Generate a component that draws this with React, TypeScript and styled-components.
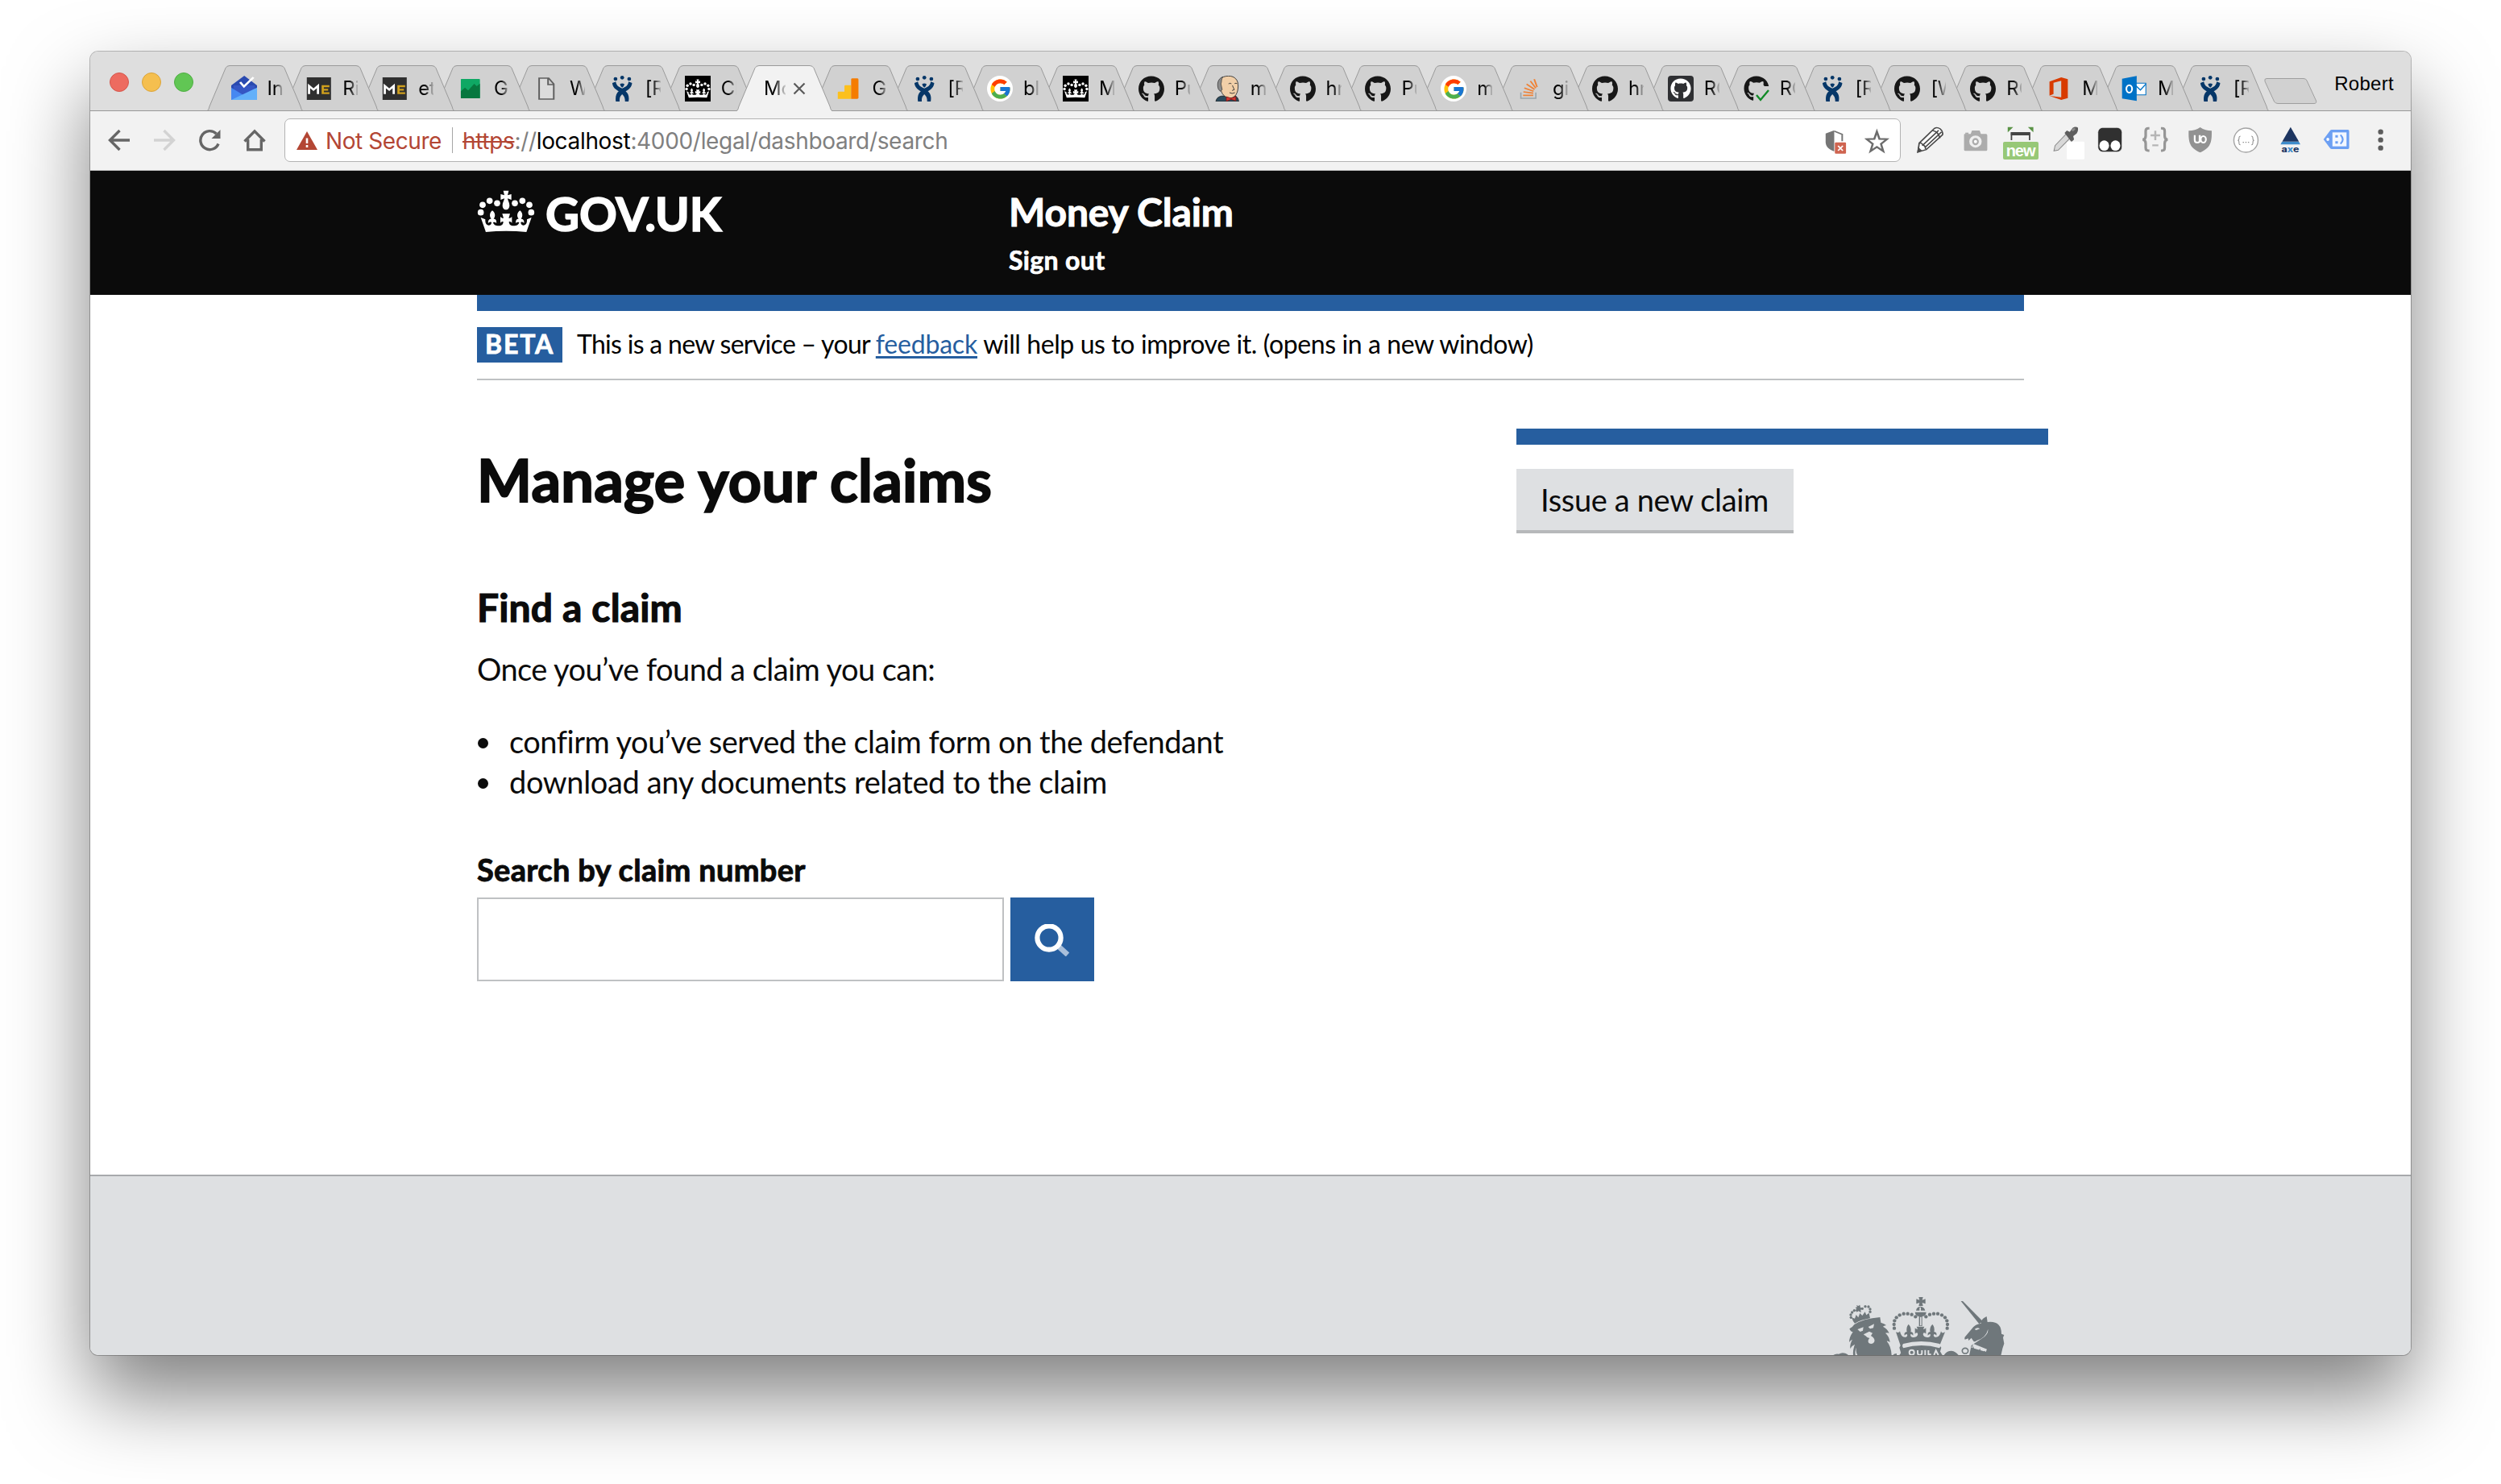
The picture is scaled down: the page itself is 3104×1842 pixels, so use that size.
import React from 'react';
import styled, { createGlobalStyle, css } from 'styled-components';
import { FaGithub } from 'react-icons/fa';
import { FcGoogle } from 'react-icons/fc';

const blue = '#265e9f';
const ink = '#0b0b0b';
const pageFont = `Lato, 'Open Sans', sans-serif`;
const chromeFont = `Inter, Roboto, sans-serif`;

const GlobalStyle = createGlobalStyle`
  body { margin: 0; background: #fff; }
  *, *::before, *::after { box-sizing: border-box; }
`;

const Desktop = styled.div`
  width: 3104px;
  height: 1842px;
  padding: 64px 112px;
  overflow: hidden;
`;

const BrowserWindow = styled.div`
  display: flex;
  flex-direction: column;
  width: 2880px;
  height: 1618px;
  overflow: hidden;
  border-radius: 10px;
  background: #fff;
  box-shadow: 0 0 0 1px rgba(0, 0, 0, 0.26), 0 50px 100px rgba(0, 0, 0, 0.5);
`;

/* ---------- tab strip ---------- */

const TabStrip = styled.div`
  display: flex;
  flex: none;
  height: 74px;
  background: linear-gradient(#989898, #989898) bottom / 100% 1px no-repeat, #dedede;
`;

const TrafficLights = styled.div`
  display: flex;
  gap: 16px;
  width: 145px;
  padding: 26px 0 0 24px;
`;

const Light = styled.span<{ $fill: string; $edge: string }>`
  width: 24px;
  height: 24px;
  border-radius: 50%;
  background: ${p => p.$fill};
  border: 1px solid ${p => p.$edge};
`;

const TabList = styled.div`
  display: flex;
  padding-top: 17px;
`;

const Tab = styled.div<{ $layer: number; $active?: boolean }>`
  display: grid;
  grid-template-columns: 119px;
  grid-template-rows: 57px;
  flex: none;
  width: 119px;
  margin-right: -25.15px;
  z-index: ${p => p.$layer};
  --fill: ${p => (p.$active ? '#f2f2f2' : '#d1d1d1')};
`;

const TabShape = styled.svg`
  grid-area: 1 / 1;
  width: 119px;
  height: 57px;
  overflow: visible;
`;

const TabContent = styled.div<{ $active?: boolean }>`
  grid-area: 1 / 1;
  z-index: 1;
  display: flex;
  align-items: center;
  height: 58px;
  padding-left: ${p => (p.$active ? 34 : 29.5)}px;
`;

const Favicon = styled.span`
  display: flex;
  align-items: center;
  justify-content: center;
  width: 32px;
  height: 32px;
  margin-right: 13px;
  color: #171717;
  svg { display: block; }
`;

const GoogleDisc = styled.span`
  display: flex;
  align-items: center;
  justify-content: center;
  width: 32px;
  height: 32px;
  border-radius: 50%;
  background: #fff;
`;

const CatTile = styled(GoogleDisc)`
  border-radius: 4px;
  background: #2f3033;
  color: #fff;
`;

const CheckedCat = styled.span`
  position: relative;
  width: 32px;
  height: 32px;
  > svg:last-child { position: absolute; right: 0; bottom: 0; }
`;

const TabTitle = styled.span<{ $width: number }>`
  width: ${p => p.$width}px;
  overflow: hidden;
  white-space: nowrap;
  font: 400 24px/32px ${chromeFont};
  letter-spacing: -0.3px;
  color: #000;
  mask-image: linear-gradient(to right, #000 45%, transparent 108%);
`;

const CloseIcon = styled.svg`
  width: 16px;
  height: 16px;
  margin-left: 9px;
`;

const NewTab = styled.svg`
  width: 66px;
  height: 32px;
  margin: 33px 0 0 19px;
`;

const ProfileName = styled.span`
  margin: 21px 21px 0 auto;
  font: 400 24px/38px 'Liberation Sans', Arial, sans-serif;
  letter-spacing: 0.3px;
  color: #000;
`;

/* ---------- toolbar ---------- */

const Toolbar = styled.div`
  display: flex;
  flex: none;
  align-items: flex-start;
  height: 74px;
  padding-top: 9px;
  background: #f2f2f2;
  border-bottom: 1px solid #bdbdbd;
`;

const NavButtons = styled.div`
  display: flex;
  gap: 28px;
  align-items: center;
  width: 241px;
  height: 54px;
  padding-left: 22px;
`;

const NavIcon = styled.svg<{ $dim?: boolean }>`
  width: 28px;
  height: 28px;
  fill: none;
  stroke: ${p => (p.$dim ? '#d3d3d3' : '#666')};
  stroke-width: 3.4;
`;

const Omnibox = styled.div`
  display: flex;
  align-items: center;
  width: 2006px;
  height: 54px;
  padding: 0 13px 0 14px;
  background: #fff;
  border: 1px solid #b3b3b3;
  border-radius: 7px;
  font: 400 28px/52px ${chromeFont};
`;

const Warning = styled.svg`
  width: 26px;
  height: 23px;
  margin-right: 10px;
`;

const NotSecure = styled.span`
  padding-top: 2px;
  color: #b34634;
  letter-spacing: -0.42px;
`;

const Divider = styled.span`
  width: 1px;
  height: 32px;
  margin: 0 12px 0 13px;
  background: #a6a6a6;
`;

const Url = styled.span`
  padding-top: 2px;
  letter-spacing: -0.33px;
  color: #808080;
  s { color: #b34634; text-decoration-thickness: 2px; }
  b { color: #000; font-weight: 400; }
`;

const OmniboxActions = styled.div`
  display: flex;
  gap: 22px;
  height: 41px;
  margin: 9px 0 0 auto;
`;

const Extensions = styled.div`
  display: flex;
  padding-top: 10px;
`;

const ToolIcon = styled.svg<{ $w: number; $gap?: number }>`
  flex: none;
  display: block;
  width: ${p => p.$w}px;
  height: 41px;
  margin-left: ${p => p.$gap ?? 0}px;
`;

const Badged = styled.span`
  position: relative;
  margin-left: 17px;
`;

const NewBadge = styled.span`
  position: absolute;
  left: 1px;
  bottom: 0;
  width: 44px;
  height: 22px;
  border-radius: 2px;
  background: #97c877;
  color: #fff;
  font: 700 20px/22px 'Liberation Sans', Arial, sans-serif;
  letter-spacing: -1px;
  text-align: center;
`;

/* ---------- page ---------- */

const column = css`
  width: 1920px;
  margin-left: 480px;
`;

const PageHeader = styled.header`
  flex: none;
  height: 154px;
  background: ${ink};
  color: #fff;
  font-family: ${pageFont};
`;

const HeaderColumn = styled.div`
  ${column}
  display: grid;
  grid-template-columns: 660px 1fr;
`;

const GovLogo = styled.a`
  display: flex;
  gap: 13px;
  padding-top: 22px;
  font-size: 58px;
  line-height: 61px;
  font-weight: 700;
  letter-spacing: -0.2px;
  -webkit-text-stroke: 1.6px #fff;
`;

const HeaderCrown = styled.svg`
  width: 72px;
  height: 52px;
  margin-top: 2px;
`;

const HeaderProposition = styled.div`
  display: flex;
  flex-direction: column;
  gap: 10px;
  padding-top: 20px;
  font-weight: 700;
`;

const ServiceName = styled.span`
  font-size: 48px;
  line-height: 61px;
  letter-spacing: -0.15px;
  -webkit-text-stroke: 1px #fff;
`;

const SignOut = styled.a`
  font-size: 32px;
  line-height: 40px;
  letter-spacing: 0.35px;
  -webkit-text-stroke: 0.7px #fff;
`;

const Main = styled.main`
  ${column}
  flex: 1;
  color: ${ink};
  font-family: ${pageFont};
`;

const PhaseBanner = styled.div`
  display: flex;
  gap: 18px;
  padding: 20px 0;
  border-top: 20px solid ${blue};
  border-bottom: 2px solid #bfc1c3;
  font-size: 32px;
  line-height: 42px;
  color: #000;
`;

const PhaseTag = styled.strong`
  width: 106px;
  height: 44px;
  padding-left: 10px;
  background: ${blue};
  color: #fff;
  letter-spacing: 1.9px;
  -webkit-text-stroke: 0.8px #fff;
`;

const PhaseText = styled.span`
  letter-spacing: -0.4px;
  white-space: nowrap;
  a {
    color: ${blue};
    letter-spacing: -0.2px;
    text-decoration: underline;
    text-decoration-thickness: 3px;
    text-underline-offset: 3px;
    text-decoration-skip-ink: none;
  }
`;

const PhaseIntro = styled.span`
  letter-spacing: -0.7px;
`;

const Columns = styled.div`
  display: grid;
  grid-template-columns: 1290px 660px;
  align-items: start;
`;

const Claims = styled.section`
  padding-top: 83px;
  font-size: 38px;
  line-height: 50px;
`;

const Title = styled.h1`
  margin: 0 0 89px;
  font-size: 72px;
  line-height: 80px;
  letter-spacing: 0.33px;
  -webkit-text-stroke: 2px ${ink};
`;

const Subtitle = styled.h2`
  margin: 0 0 21px;
  font-size: 48px;
  line-height: 60px;
  letter-spacing: 0.15px;
  -webkit-text-stroke: 1.2px ${ink};
`;

const Lead = styled.p`
  margin: 0 0 40px;
  letter-spacing: -0.56px;
`;

const BulletList = styled.ul`
  margin: 0 0 59px;
  padding: 0;
  list-style: none;
`;

const Bullet = styled.li<{ $tracking: number }>`
  display: flex;
  align-items: center;
  gap: 26px;
  letter-spacing: ${p => p.$tracking}px;
  &::before {
    content: '';
    width: 13px;
    height: 13px;
    margin: 4px 0 0 1px;
    border-radius: 50%;
    background: ${ink};
  }
`;

const FieldLabel = styled.label`
  display: block;
  margin-bottom: 10px;
  font-weight: 700;
  letter-spacing: 0.32px;
  -webkit-text-stroke: 0.9px ${ink};
`;

const SearchRow = styled.div`
  display: flex;
  gap: 8px;
`;

const SearchInput = styled.input`
  width: 654px;
  height: 104px;
  border: 2px solid #bfc1c3;
  border-radius: 0;
  background: #fff;
  outline: none;
`;

const SearchButton = styled.button`
  display: flex;
  width: 104px;
  height: 104px;
  padding: 33px 0 0 30px;
  border: 0;
  background: ${blue};
`;

const Sidebar = styled.aside`
  margin-top: 60px;
  padding-top: 30px;
  border-top: 20px solid ${blue};
`;

const SecondaryButton = styled.a`
  display: block;
  width: 344px;
  height: 80px;
  padding: 13px 0 0 30px;
  background: #dee0e2;
  border-bottom: 4px solid #b7b9bb;
  font-size: 38px;
  line-height: 50px;
  letter-spacing: -0.35px;
  white-space: nowrap;
`;

const Footer = styled.footer`
  display: flex;
  flex: none;
  justify-content: flex-end;
  align-items: flex-end;
  height: 224px;
  padding-right: 492px;
  background: #dee0e2;
  border-top: 2px solid #a7a9ac;
`;

const Arms = styled.svg`
  display: block;
  width: 230px;
  height: 74px;
  fill: #6f777b;
`;

/* ---------- drawings ---------- */

const CrownShape = () => (
  <g fill="#fff">
    {[[57, 103], [83, 88], [111, 97], [177, 97], [205, 88], [231, 103], [50, 131], [238, 131]].map(([x, y]) => (
      <circle key={`${x}-${y}`} cx={x} cy={y} r={11.5} />
    ))}
    <path d="M134 50h20l-4 17 14-4v21l-14-5c0 7 7 14 7 26 0 9-5 16-13 16s-13-7-13-16c0-12 7-19 7-26l-14 5V63l14 4z" />
    <path d="M69 204l-19-54 17 7c-1 15 5 23 14 22 6-1 9-5 9-11-4-3-10 0-12 3-2-10 3-16 11-16-8-10-6-23 4-31 11 8 13 21 5 31 8 0 12 6 10 16-3-4-8-5-12-3 1 8 9 13 21 13 11 0 17-6 17-15-4-2-8 0-11 5V147c4 5 8 6 12 5l-5-16h29l-5 16c4 1 8 0 12-5v24c-3-5-7-7-11-5 0 9 6 15 17 15 12 0 20-5 21-13-4-2-9-1-12 3-2-10 2-16 10-16-8-10-6-23 5-31 10 8 12 21 4 31 8 0 13 6 11 16-2-3-8-6-12-3 0 6 3 10 9 11 9 1 15-7 14-22l17-7-19 54q-75-7-152 0z" />
  </g>
);

const Inbox = () => (
  <svg width="32" height="32" viewBox="475 132 81 96" preserveAspectRatio="none">
    <path d="M475 168l41-36 40 36v52h-81z" fill="#2a4ab0" />
    <path d="M482 168h67v24l-33 22-34-22z" fill="#3556c4" />
    <path d="M475 176l41 30-36 16h-5z" fill="#4688f1" />
    <path d="M556 176v46h-81z" fill="#63b0fa" />
    <path d="M503 156l12 16 30-34" stroke="#fff" strokeWidth="7" fill="none" />
  </svg>
);

const Me = () => (
  <svg width="32" height="32" viewBox="706 132 81 96" preserveAspectRatio="none">
    <rect x="708" y="138" width="76" height="84" fill="#2f2f2f" />
    <path d="M715 200v-30l14 14 14-14v30" stroke="#fff" strokeWidth="7" fill="none" />
    <path d="M779 171h-21v26h21M758 184h17" stroke="#cf9f1c" strokeWidth="7" fill="none" />
  </svg>
);

const GreenChart = () => (
  <svg width="32" height="32" viewBox="1184 132 81 96" preserveAspectRatio="none">
    <rect x="1194" y="144" width="60" height="72" rx="2" fill="#0fa864" />
    <path d="M1194 190l13-14 10 11 19-25 8 9 10-10v55h-60z" fill="#07773f" />
  </svg>
);

const PageFile = () => (
  <svg width="32" height="32" viewBox="1421 132 81 96" preserveAspectRatio="none">
    <path d="M1439 141h30l16 22v56h-46zM1467 141v24h18" fill="#dcdcdc" stroke="#5f5f5f" strokeWidth="5" />
  </svg>
);

const Jira = () => (
  <svg width="32" height="32" viewBox="141 132 81 96" preserveAspectRatio="none" fill="#063768">
    <ellipse cx="161" cy="144" rx="6" ry="7" />
    <ellipse cx="182" cy="139" rx="6" ry="7" />
    <ellipse cx="204" cy="144" rx="6" ry="7" />
    <path d="M175 163q7-5 14 0-1 9-7 13-6-4-7-13z" />
    <path d="M151 159l11-5c1 14 9 21 20 25 11-4 19-11 20-25l11 5c-1 16-10 24-20 31 8 8 12 20 9 38h-11c0-13-3-21-9-27-6 6-9 14-8 27h-12c-2-18 1-30 9-38-10-7-19-15-20-31z" />
  </svg>
);

const CrownTile = () => (
  <svg width="32" height="32" viewBox="36 20 216 216">
    <rect x="36" y="20" width="216" height="216" />
    <CrownShape />
  </svg>
);

const Analytics = () => (
  <svg width="32" height="32" viewBox="856 132 81 96" preserveAspectRatio="none">
    <path d="M863 218v-24q0-3 3-3h18v-21q0-3 3-3h18v51z" fill="#fcc01c" />
    <path d="M905 218v-72q0-4 4-4h15q4 0 4 4v68q0 4-4 4z" fill="#f57c00" />
  </svg>
);

const Jenkins = () => (
  <svg width="32" height="32" viewBox="520 132 81 96" preserveAspectRatio="none">
    <path d="M525 228q2-16 16-20l40-4q15 6 16 24z" fill="#2c4a5c" stroke="#1b1b1b" strokeWidth="2" />
    <path d="M534 178c-6-28 8-45 31-45 20 0 31 16 30 38 0 26-10 44-24 44-14 0-25-10-29-26z" fill="#f1cfa8" stroke="#333" strokeWidth="2.5" />
    <path d="M533 182c-6-22 0-40 14-46-6 10-3 18-6 26l4 22-6 6z" fill="#8b8b8b" stroke="#333" strokeWidth="2" />
    <path d="M565 162q5-4 9 0M584 161q5-3 8 1M577 168l6 16-7 3M568 195q8 6 17 0" fill="none" stroke="#333" strokeWidth="2.5" />
    <path d="M558 210l15 6 15-7v17l-15-6-15 7z" fill="#d33833" stroke="#751512" strokeWidth="2" />
  </svg>
);

const Stack = () => (
  <svg width="32" height="32" viewBox="1475 132 81 96" preserveAspectRatio="none" fill="none" strokeWidth="5">
    <path d="M1489 194v22h47v-22" stroke="#9aa5ab" strokeWidth="4" />
    <path d="M1496 205h32M1497 192l31 5M1500 178l29 12M1507 163l25 20M1519 152l17 26M1531 145l9 29" stroke="#ef8236" />
  </svg>
);

const Office = () => (
  <svg width="32" height="32" viewBox="161 132 90 96" preserveAspectRatio="none" fill="#d83b01">
    <path d="M174 154l41-16 23 7v70l-23 7-41-15 41 5v-61l-27 7v42l-14 6z" />
  </svg>
);

const Outlook = () => (
  <svg width="32" height="32" viewBox="426 132 90 96" preserveAspectRatio="none">
    <path d="M470 160h41v43h-41z" fill="#fff" stroke="#0072c6" strokeWidth="3" />
    <path d="M472 165l20 20 19-22" fill="none" stroke="#0072c6" strokeWidth="4" />
    <path d="M428 143l51-10v93l-51-9z" fill="#0072c6" />
    <ellipse cx="453" cy="181" rx="10" ry="14" fill="none" stroke="#fff" strokeWidth="6" />
  </svg>
);

const Cat = () => <FaGithub size={33} />;
const Google = () => <GoogleDisc><FcGoogle size={29} /></GoogleDisc>;
const DarkCat = () => <CatTile><FaGithub size={26} /></CatTile>;
const CatChecked = () => (
  <CheckedCat>
    <FaGithub size={32} />
    <svg width="19" height="19" viewBox="0 0 19 19">
      <path d="M0 9L12 0h7v19H0z" fill="#d1d1d1" />
      <path d="M3 11l5 6L18 5" fill="none" stroke="#118a27" strokeWidth="2.4" />
    </svg>
  </CheckedCat>
);

const tabs: { title: string; icon?: React.ComponentType; active?: boolean }[] = [
  { title: 'In', icon: Inbox },
  { title: 'Ri', icon: Me },
  { title: 'et', icon: Me },
  { title: 'Go', icon: GreenChart },
  { title: 'W', icon: PageFile },
  { title: '[R', icon: Jira },
  { title: 'Cl', icon: CrownTile },
  { title: 'Mo', active: true },
  { title: 'G', icon: Analytics },
  { title: '[R', icon: Jira },
  { title: 'bl', icon: Google },
  { title: 'M', icon: CrownTile },
  { title: 'Pu', icon: Cat },
  { title: 'm', icon: Jenkins },
  { title: 'hm', icon: Cat },
  { title: 'Pu', icon: Cat },
  { title: 'm', icon: Google },
  { title: 'gi', icon: Stack },
  { title: 'hm', icon: Cat },
  { title: 'RO', icon: DarkCat },
  { title: 'RO', icon: CatChecked },
  { title: '[R', icon: Jira },
  { title: '[W', icon: Cat },
  { title: 'RO', icon: Cat },
  { title: 'M', icon: Office },
  { title: 'M', icon: Outlook },
  { title: '[R', icon: Jira },
];

const lights = [
  ['#ed6b60', '#d5564c'],
  ['#f5bf4f', '#dba43a'],
  ['#61c654', '#4fae43'],
];

function BrowserTabs() {
  return (
    <TabStrip>
      <TrafficLights>
        {lights.map(([fill, edge]) => <Light key={fill} $fill={fill} $edge={edge} />)}
      </TrafficLights>
      <TabList>
        {tabs.map(({ title, icon: Icon, active }, i) => (
          <Tab key={i} $active={active} $layer={active ? 50 : 40 - i}>
            <TabShape viewBox="0 0 119 57">
              <path d="M0 57C2 56 2 54 3 51L23 3.5Q24.500 .5 28 .5H91Q94.500 .5 96 3.500L116 51C117 54 117 56 119 57z" fill="var(--fill)" />
              <path d="M0 56.500C2 56 2 54 3 51L23 3.500Q24.500 .5 28 .5H91Q94.500 .5 96 3.500L116 51C117 54 117 56 119 56.500" fill="none" stroke="#9a9a9a" />
              {!active && <path d="M0 56.500H119" stroke="#989898" />}
            </TabShape>
            <TabContent $active={active}>
              {Icon && <Favicon><Icon /></Favicon>}
              <TabTitle $width={active ? 27 : 19}>{title}</TabTitle>
              {active && (
                <CloseIcon viewBox="0 0 16 16">
                  <path d="M1.500 1.500l13 13M14.500 1.500l-13 13" stroke="#5a5a5a" strokeWidth="2.2" />
                </CloseIcon>
              )}
            </TabContent>
          </Tab>
        ))}
      </TabList>
      <NewTab viewBox="0 0 66 32">
        <path d="M3 .5H49Q52 .5 53 3L64.500 28Q65.500 31.500 62 31.500H17Q14 31.500 12.500 29L1 4Q0 .5 3 .5z" fill="#d1d1d1" stroke="#9f9f9f" />
      </NewTab>
      <ProfileName>Robert</ProfileName>
    </TabStrip>
  );
}

function BrowserToolbar() {
  return (
    <Toolbar>
      <NavButtons>
        <NavIcon viewBox="0 0 28 28"><path d="M27 14H3M14.500 2L2.500 14l12 12" /></NavIcon>
        <NavIcon viewBox="0 0 28 28" $dim><path d="M1 14h24M13.500 2l12 12-12 12" /></NavIcon>
        <NavIcon viewBox="0 0 28 28">
          <path d="M25 18.500A11.500 11.500 0 1 1 22.500 6" />
          <path d="M27.500 1v11H16.500z" fill="#666" stroke="none" />
        </NavIcon>
        <NavIcon viewBox="0 0 28 28"><path d="M1.500 15.500L14 2.800l12.500 12.700M5.700 13v12.800h16.600V13" /></NavIcon>
      </NavButtons>
      <Omnibox>
        <Warning viewBox="0 0 26 23">
          <path d="M13 0l13 23H0z" fill="#b34634" />
          <path d="M13 8.500v6.500M13 17v3" stroke="#fff" strokeWidth="2.600" />
        </Warning>
        <NotSecure>Not Secure</NotSecure>
        <Divider />
        <Url><s>https</s>://<b>localhost</b>:4000/legal/dashboard/search</Url>
        <OmniboxActions>
          <ToolIcon $w={26.9} viewBox="925 322 68 123" preserveAspectRatio="none">
            <path d="M930 348l24-12 26 12v32c-1 15-12 26-26 29-14-4-24-15-24-29z" fill="#fff" />
            <path d="M954 333v79c-16-6-27-18-27-35v-32z" fill="#757575" />
            <path d="M954 336l25 12v26" fill="none" stroke="#757575" strokeWidth="5" />
            <rect x="956" y="378" width="35" height="42" rx="3" fill="#cf6450" />
            <path d="M966 391l15 18M981 391l-15 18" stroke="#fff" strokeWidth="4.500" />
          </ToolIcon>
          <ToolIcon $w={30.8} viewBox="1048 322 78 123" preserveAspectRatio="none">
            <path d="M1087 338l8 27 24 1-19 18 7 27-20-16-20 16 7-27-19-18 24-1z" fill="none" stroke="#6c6c6c" strokeWidth="6.500" />
          </ToolIcon>
        </OmniboxActions>
      </Omnibox>
      <Extensions>
        <ToolIcon $gap={19.3} $w={34.8} viewBox="1210 322 88 123" preserveAspectRatio="none" fill="none" stroke="#4a4a4a" strokeWidth="4.500">
          <path d="M1216 417l4-33 48-55q8-6 18 2 10 10 7 22l-51 55z" fill="#fff" />
          <path d="M1220 384q10-2 11 8 8 0 9 14M1231 392l50-56M1238 400l52-58M1261 337q18 2 24 28" />
          <path d="M1216 417l2-14 8 9z" fill="#4a4a4a" />
        </ToolIcon>
        <ToolIcon $gap={22.9} $w={31.6} viewBox="1356 322 80 123" preserveAspectRatio="none">
          <path d="M1361 350h20l4-13h24l4 13h16q4 0 4 5v53q0 5-4 5h-65q-4 0-4-5v-53q0-5 1-5z" fill="#acacac" />
          <rect x="1364" y="345" width="10" height="6" fill="#acacac" />
          <ellipse cx="1396" cy="378" rx="15" ry="18" fill="#acacac" stroke="#efefef" strokeWidth="9" />
          <ellipse cx="1396" cy="378" rx="5" ry="6" fill="#fff" />
        </ToolIcon>
        <Badged>
          <ToolIcon $w={45.4} viewBox="15 322 127 123" preserveAspectRatio="none">
            <path d="M34 324h19l-19 20zM123 324v20l-19-20z" fill="#5a9346" />
            <path d="M47 373v-27h63v27" fill="none" stroke="#454545" strokeWidth="5" />
            <path d="M45 349h66" stroke="#454545" strokeWidth="12" />
          </ToolIcon>
          <NewBadge>new</NewBadge>
        </Badged>
        <ToolIcon $gap={17.1} $w={41.4} viewBox="190 322 116 123" preserveAspectRatio="none">
          <path d="M196 413l4-20 42-47 15 14-46 50z" fill="#d8d8d8" stroke="#8d8d8d" strokeWidth="3" />
          <path d="M233 346l8-9 10 5 10-15q10-7 18-1 3 12-4 22l-12 10 3 12-9 10z" fill="#5d5d5d" />
          <path d="M256 333l10-6 6 4-10 10z" fill="#8b8b8b" />
          <rect x="241" y="378" width="61" height="66" rx="3" fill="#fff" />
        </ToolIcon>
        <ToolIcon $gap={15} $w={31.4} viewBox="348 322 88 123" preserveAspectRatio="none">
          <rect x="350" y="326" width="84" height="91" rx="17" ry="18" fill="#303030" stroke="#fff" strokeWidth="2" />
          <ellipse cx="372" cy="393" rx="17" ry="19" fill="#fff" />
          <ellipse cx="411" cy="393" rx="17" ry="19" fill="#fff" />
        </ToolIcon>
        <ToolIcon $gap={23.6} $w={33.6} viewBox="502 322 94 123" preserveAspectRatio="none" fill="none" stroke="#969696" strokeWidth="9">
          <path d="M529 329h-4q-9 0-9 10v18q0 12-10 14 10 2 10 14v16q0 11 9 11h4M569 329h4q9 0 9 10v18q0 12 10 14-10 2-10 14v16q0 11-9 11h-4" />
          <path d="M533 355h33M549.500 338v35M539 392h21" stroke="#b5b5b5" strokeWidth="7" />
        </ToolIcon>
        <ToolIcon $gap={24.2} $w={30} viewBox="664 322 84 123" preserveAspectRatio="none">
          <path d="M705 325c12 9 25 13 40 13 1 42-3 64-40 81-37-17-41-39-40-81 15 0 28-4 40-13z" fill="#929292" />
          <path d="M686 354v18q0 10 9 10t9-10v-18M703 354v27" fill="none" stroke="#fff" strokeWidth="6" />
          <ellipse cx="716" cy="370" rx="9" ry="12" fill="none" stroke="#fff" strokeWidth="6" />
        </ToolIcon>
        <ToolIcon $gap={25} $w={32.9} viewBox="818 322 92 123" preserveAspectRatio="none">
          <ellipse cx="864" cy="373" rx="42" ry="45" fill="#fff" stroke="#a3a3a3" strokeWidth="4" />
          <path d="M845 358q-5 0-5 6v4q0 5-4 6 4 1 4 6v4q0 6 5 6M883 358q5 0 5 6v4q0 5 4 6-4 1-4 6v4q0 6-5 6" fill="none" stroke="#8f8f8f" strokeWidth="3" />
          <path d="M853 381h4M862 381h4M871 381h4" stroke="#8f8f8f" strokeWidth="4" />
        </ToolIcon>
        <ToolIcon $gap={25.7} $w={25.7} viewBox="982 322 72 123" preserveAspectRatio="none">
          <path d="M1018 324l29 54h-58z" fill="#1d3560" />
          <path d="M988 379h59l5 10h-69z" fill="#3f8ccb" />
          <text x="986" y="418" fontFamily="Inter, sans-serif" fontWeight="800" fontSize="30" textLength="62" lengthAdjust="spacingAndGlyphs" fill="#1d3560">
            a<tspan fill="#3f8ccb">x</tspan>e
          </text>
        </ToolIcon>
        <ToolIcon $gap={27.2} $w={33.6} viewBox="1130 322 94 123" preserveAspectRatio="none">
          <path d="M1132 370l23-33q2-3 6-3h56q4 0 4 5v62q0 5-4 5h-56q-4 0-6-3z" fill="#6c9ff3" />
          <ellipse cx="1147" cy="370" rx="5" ry="6" fill="#fff" />
          <rect x="1163" y="344" width="49" height="52" fill="#f3f7ff" />
          <path d="M1173 354h9v9h-9zM1173 377h9v9h-9z" fill="#6c9ff3" />
          <path d="M1191 353q16 17 0 34" fill="none" stroke="#6c9ff3" strokeWidth="6" />
        </ToolIcon>
        <ToolIcon $gap={34.2} $w={9.3} viewBox="1320 322 26 123" preserveAspectRatio="none" fill="#5c5c5c">
          <ellipse cx="1333" cy="342" rx="9" ry="9.500" />
          <ellipse cx="1333" cy="372" rx="9" ry="9.500" />
          <ellipse cx="1333" cy="402" rx="9" ry="9.500" />
        </ToolIcon>
      </Extensions>
    </Toolbar>
  );
}

const armsBeads = [
  [393, 236], [392, 222], [394, 208], [401, 196], [413, 187], [428, 182], [443, 182], [458, 185], [472, 193],
  [590, 236], [591, 222], [589, 208], [582, 196], [570, 187], [555, 182], [540, 182], [525, 185], [511, 193],
];
const lionBeads = [[232, 196], [231, 186], [236, 177], [244, 170], [254, 169], [285, 155], [297, 156], [303, 165], [303, 175], [274, 163]];

function RoyalArms() {
  return (
    <Arms viewBox="150 114 690 222">
      {armsBeads.map(([x, y]) => <circle key={`${x}-${y}`} cx={x} cy={y} r={6.5} />)}
      <path d="M484 120h16l-3 11 12-4v18l-12-4 3 12h-16l3-12-12 4v-18l12 4z" />
      <path d="M474 170q2-13 16-15 15 2 18 15h-16v-12h-5v12zM470 176h42q-1 14-15 16v36h-12v-36q-13-2-15-16z" />
      <path d="M489 194h5v32h-5z" fill="#dee0e2" />
      <path d="M416 300l-17-50q12 5 15-3c3 15 10 24 22 22 6-2 7-7 4-11q-6 0-9 5-3-12 9-14-4-16 6-28 12 12 8 28 12 2 9 14-4-6-9-5c-3 12 10 14 20 10 8-4 8-12 4-15q-5 0-8 4v-22q4 5 10 4l-4-9h29l-4 9q6 1 10-4v22q-3-4-8-4c-4 3-4 11 4 15 10 4 23 2 20-10q-5-1-9 5-3-12 9-14-4-16 8-28 10 12 6 28 12 2 9 14-3-5-9-5c-3 4-2 9 4 11 12 2 19-7 22-22 3 8 8 8 15 3l-20 50 6 8-8 28H420l-8-28z" />
      <path d="M426 294q66-18 136 0 6 8-1 16-66-20-134 0-7-8-1-16z" fill="#dee0e2" />
      <path d="M412 336q14-24 40-29 42-8 84 0 26 6 36 29z" />
      <g fill="none" stroke="#dee0e2" strokeWidth="6">
        <ellipse cx="458" cy="326" rx="9" ry="9" />
        <path d="M480 318v10q0 8 8 8t8-8v-10M508 317v20M520 318v16h10M541 336l7-17 9 17" />
      </g>
      {lionBeads.map(([x, y]) => <circle key={`${x}-${y}`} cx={x} cy={y} r={5} />)}
      <path d="M252 150l7 3 6-4 2 10 8 2-7 7 1 10-9-6-8 4 2-10-6-7 7-2z" />
      <path d="M240 210l-6-14 12 4 5-14 8 10 6-16 9 9 10-14 5 12 10-8 4 20q-30 4-57 19z" />
      <path d="M226 238q10-4 18-16 34-22 96-27l3 20q14 4 20 10-10 2-12 5 16 8 23 24-8-3-14 0 14 12 17 34-8-6-12-4 16 18 18 52H256q-8-14-4-28-6 10-4 28h-8q-2-18 6-40-10 4-17 16-2-18 8-34-7 2-12 10 0-18 14-38-8 0-13-12z" />
      <path d="M256 240l22-8-2 13-10 4zM296 231l22-11-3 15-12 3zM280 258l20-10 12 6-6 10q18 10 12 24-8 10-20 3-6-8 3-18-10-2-16-10-8-3-5-5z" fill="#dee0e2" />
      <path d="M166 336q8-6 20-4 16-10 34 2v2zM578 336q10-16 28-16 16 2 26 16zM388 336q4-6 14-6v6z" />
      <path d="M641 135l7 0 75 76-14 9z" />
      <path d="M717 209q5-10 20-17l3 21q52-6 52 44l10 4-4 10 4 22-6 18-6 27H672l8-38 40-26q24-16 22-34-8 32-42 42-8 6-12 2l-8-12-10 10-2-8-12 4q-4-8 4-14l22-26q12-18 34-20z" />
      <path d="M688 294l50 20-4 10-54-16z" fill="#dee0e2" />
      <path d="M692 240q10-10 20-2l-14 5z" fill="#dee0e2" />
      <path d="M686 300q3 17 18 26l8-15 5 18 14-9 3 16h-54z" />
      <ellipse cx="657" cy="320" rx="11" ry="10" fill="none" stroke="#6f777b" strokeWidth="5" />
    </Arms>
  );
}

export default function App() {
  return (
    <>
      <GlobalStyle />
      <Desktop>
        <BrowserWindow>
          <BrowserTabs />
          <BrowserToolbar />
          <PageHeader>
            <HeaderColumn>
              <GovLogo>
                <HeaderCrown viewBox="36 48 216 156"><CrownShape /></HeaderCrown>
                GOV.UK
              </GovLogo>
              <HeaderProposition>
                <ServiceName>Money Claim</ServiceName>
                <SignOut>Sign out</SignOut>
              </HeaderProposition>
            </HeaderColumn>
          </PageHeader>
          <Main>
            <PhaseBanner>
              <PhaseTag>BETA</PhaseTag>
              <PhaseText>
                <PhaseIntro>This is a new service – your </PhaseIntro>
                <a>feedback</a> will help us to improve it. (opens in a new window)
              </PhaseText>
            </PhaseBanner>
            <Columns>
              <Claims>
                <Title>Manage your claims</Title>
                <Subtitle>Find a claim</Subtitle>
                <Lead>Once you’ve found a claim you can:</Lead>
                <BulletList>
                  <Bullet $tracking={-0.5}>confirm you’ve served the claim form on the defendant</Bullet>
                  <Bullet $tracking={-0.36}>download any documents related to the claim</Bullet>
                </BulletList>
                <FieldLabel htmlFor="claim-number">Search by claim number</FieldLabel>
                <SearchRow>
                  <SearchInput id="claim-number" />
                  <SearchButton aria-label="Search">
                    <svg width="44" height="40" viewBox="0 0 44 40" fill="none">
                      <path d="M29 27l12 11" stroke="#a9bfda" strokeWidth="6.500" />
                      <circle cx="18" cy="17" r="14.600" stroke="#fff" strokeWidth="6.200" />
                    </svg>
                  </SearchButton>
                </SearchRow>
              </Claims>
              <Sidebar>
                <SecondaryButton>Issue a new claim</SecondaryButton>
              </Sidebar>
            </Columns>
          </Main>
          <Footer><RoyalArms /></Footer>
        </BrowserWindow>
      </Desktop>
    </>
  );
}
